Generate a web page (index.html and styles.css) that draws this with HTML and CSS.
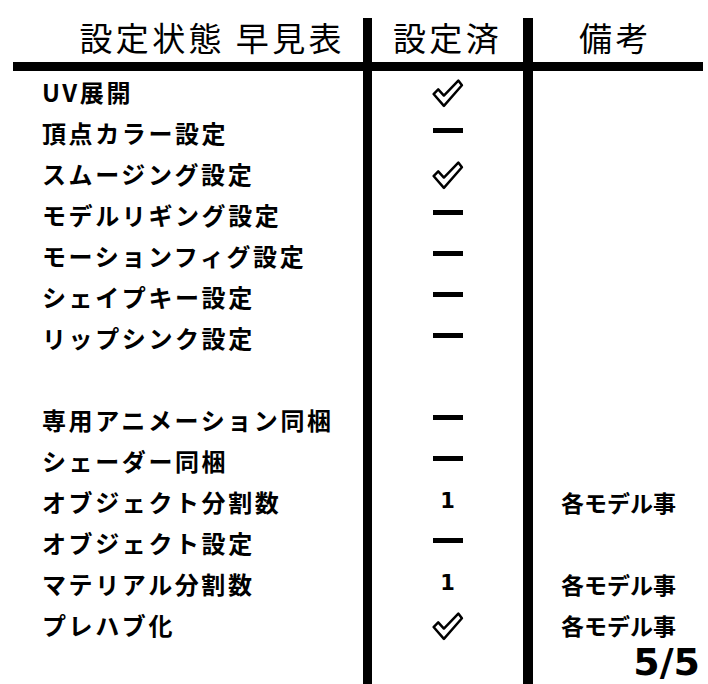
FILE: index.html
```html
<!DOCTYPE html>
<html lang="ja">
<head>
<meta charset="utf-8">
<link rel="stylesheet" href="styles.css">
</head>
<body>
<div class="sheet">
  <div class="head">
    <div class="h-title">設定状態 早見表</div>
    <div class="mid h-mid">設定済</div>
    <div class="h-note">備考</div>
  </div>
  <div class="rule"></div>
  <div class="rows">
    <div class="row"><div class="label">UV展開</div><div class="mid"><svg class="check" viewBox="0 0 32 30"><path d="M2.5 15.5 L7 11 L12.5 17 L26.5 2.5 L30 7 L12.5 27 Z"/></svg></div><div class="note"></div></div>
    <div class="row"><div class="label">頂点カラー設定</div><div class="mid"><span class="dash"></span></div><div class="note"></div></div>
    <div class="row"><div class="label">スムージング設定</div><div class="mid"><svg class="check" viewBox="0 0 32 30"><path d="M2.5 15.5 L7 11 L12.5 17 L26.5 2.5 L30 7 L12.5 27 Z"/></svg></div><div class="note"></div></div>
    <div class="row"><div class="label">モデルリギング設定</div><div class="mid"><span class="dash"></span></div><div class="note"></div></div>
    <div class="row"><div class="label">モーションフィグ設定</div><div class="mid"><span class="dash"></span></div><div class="note"></div></div>
    <div class="row"><div class="label">シェイプキー設定</div><div class="mid"><span class="dash"></span></div><div class="note"></div></div>
    <div class="row"><div class="label">リップシンク設定</div><div class="mid"><span class="dash"></span></div><div class="note"></div></div>
    <div class="row"><div class="label"></div><div class="mid"></div><div class="note"></div></div>
    <div class="row"><div class="label">専用アニメーション同梱</div><div class="mid"><span class="dash"></span></div><div class="note"></div></div>
    <div class="row"><div class="label">シェーダー同梱</div><div class="mid"><span class="dash"></span></div><div class="note"></div></div>
    <div class="row"><div class="label">オブジェクト分割数</div><div class="mid"><span class="num">1</span></div><div class="note">各モデル事</div></div>
    <div class="row"><div class="label">オブジェクト設定</div><div class="mid"><span class="dash"></span></div><div class="note"></div></div>
    <div class="row"><div class="label">マテリアル分割数</div><div class="mid"><span class="num">1</span></div><div class="note">各モデル事</div></div>
    <div class="row"><div class="label">プレハブ化</div><div class="mid"><svg class="check" viewBox="0 0 32 30"><path d="M2.5 15.5 L7 11 L12.5 17 L26.5 2.5 L30 7 L12.5 27 Z"/></svg></div><div class="note">各モデル事</div></div>
    <div class="row last"><div class="label"></div><div class="mid"></div><div class="note page"><span class="page-text">5/5</span></div></div>
  </div>
</div>
</body>
</html>
```

FILE: styles.css
```css
html, body {
  margin: 0;
  padding: 0;
  background: #ffffff;
}

body {
  width: 708px;
  height: 684px;
  overflow: hidden;
  font-family: "Noto Sans CJK JP", "Noto Sans", sans-serif;
  color: #000;
}

.sheet {
  padding-top: 18px;
}

.head,
.row {
  display: grid;
  grid-template-columns: 363px 170px 175px;
}

.head {
  height: 44px;
  font-size: 33px;
  font-weight: 400;
  letter-spacing: 3.4px;
  line-height: 1;
}

.head > div {
  display: flex;
  align-items: center;
  padding-bottom: 6px;
}

.h-title {
  justify-content: flex-end;
  padding-right: 18px;
}

.h-mid {
  justify-content: center;
}

.h-note {
  justify-content: center;
  padding-right: 10px;
}

.mid {
  box-sizing: border-box;
  border-left: 9px solid #000;
  border-right: 10px solid #000;
  display: flex;
  align-items: center;
  justify-content: center;
}

.rule {
  height: 9px;
  margin: 0 5px 0 13px;
  background: #000;
}

.row {
  height: 41px;
}

.row.last {
  height: 39px;
}

.label {
  display: flex;
  align-items: center;
  padding-left: 42px;
  font-size: 24px;
  font-weight: 700;
  letter-spacing: 2.6px;
  white-space: nowrap;
}

.note {
  display: flex;
  align-items: center;
  justify-content: center;
  padding-right: 4px;
  font-size: 23px;
  font-weight: 700;
  white-space: nowrap;
}

.note.page {
  justify-content: flex-end;
  align-items: flex-start;
  padding-right: 8px;
}

.page-text {
  font-family: "DejaVu Sans", sans-serif;
  font-size: 38px;
  line-height: 36px;
  margin-top: -1px;
}

.check {
  width: 33px;
  height: 31px;
  margin-top: 4px;
}

.check path {
  fill: #fff;
  stroke: #000;
  stroke-width: 2.4;
  stroke-linejoin: round;
}

.dash {
  display: block;
  width: 30px;
  height: 5px;
  background: #000;
  margin-top: -4px;
}

.num {
  font-family: "DejaVu Sans", sans-serif;
  font-weight: 700;
  font-size: 21px;
  line-height: 1;
}
```
